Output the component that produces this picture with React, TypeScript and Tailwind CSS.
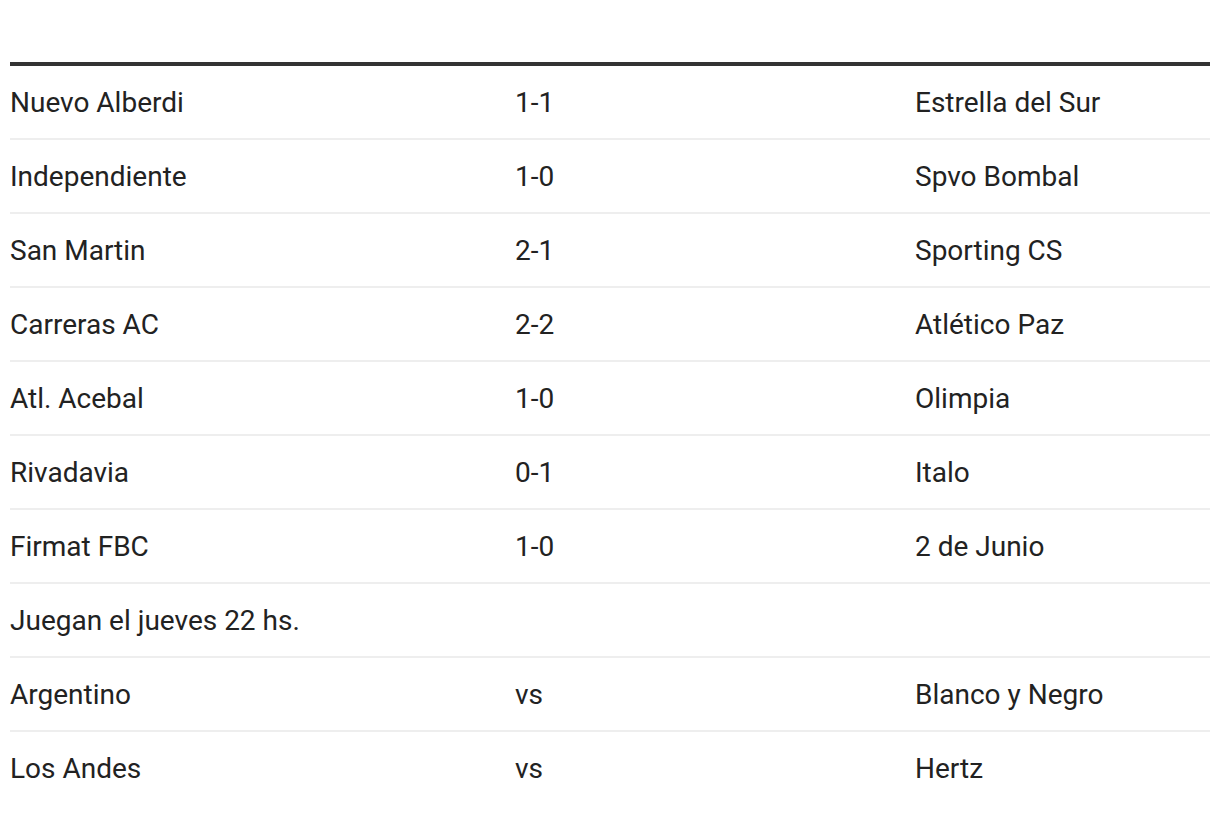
import React from "react";

const rows: [string, string, string][] = [
  ["Nuevo Alberdi", "1-1", "Estrella del Sur"],
  ["Independiente", "1-0", "Spvo Bombal"],
  ["San Martin", "2-1", "Sporting CS"],
  ["Carreras AC", "2-2", "Atlético Paz"],
  ["Atl. Acebal", "1-0", "Olimpia"],
  ["Rivadavia", "0-1", "Italo"],
  ["Firmat FBC", "1-0", "2 de Junio"],
  ["Juegan el jueves 22 hs.", "", ""],
  ["Argentino", "vs", "Blanco y Negro"],
  ["Los Andes", "vs", "Hertz"],
];

export default function App() {
  return (
    <div
      className="bg-white min-h-screen pt-[62px] px-[10px] text-[#222] text-[28px]"
      style={{ fontFamily: "Roboto, 'Liberation Sans', sans-serif" }}
    >
      <div className="border-t-4 border-[#333]">
        {rows.map(([a, b, c], i) => (
          <div
            key={i}
            className={
              i === rows.length - 1
                ? "flex items-center h-[74px] pt-[2px] pb-[2px]"
                : "flex items-center h-[74px] pt-[2px] border-b-2 border-[#eee]"
            }
          >
            <div className="w-[505px]">{a}</div>
            <div className="w-[400px]">{b}</div>
            <div className="flex-1">{c}</div>
          </div>
        ))}
      </div>
    </div>
  );
}
